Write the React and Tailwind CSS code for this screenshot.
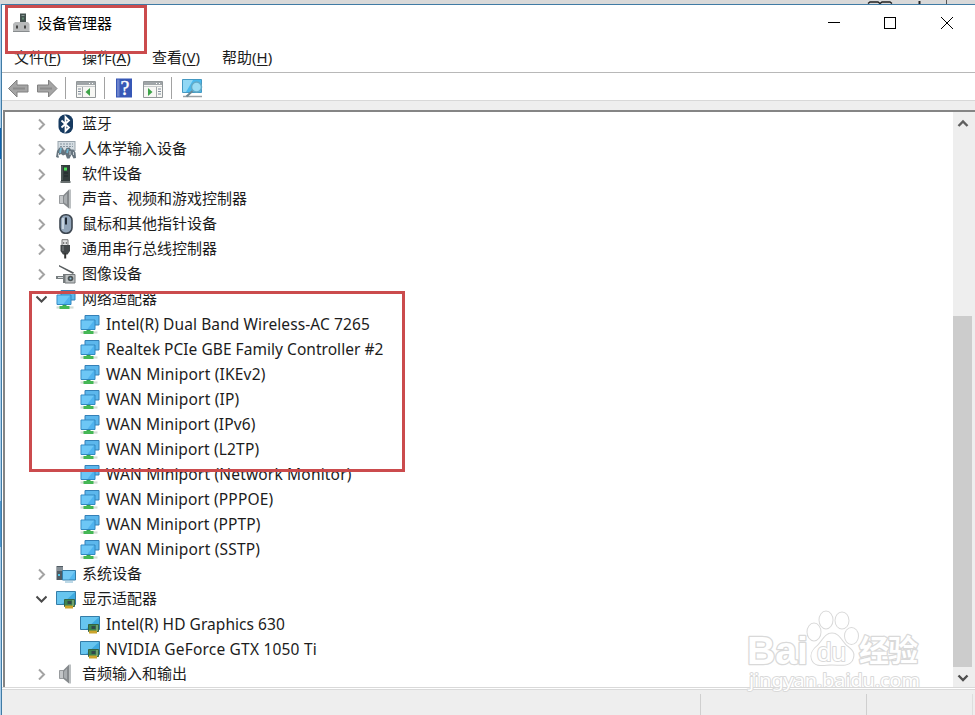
// Device manager window

const devices = [
  { icon: "bluetooth", text: "蓝牙" },
  { icon: "hid", text: "人体学输入设备" },
  { icon: "software", text: "软件设备" },
  { icon: "speaker", text: "声音、视频和游戏控制器" },
  { icon: "mouse", text: "鼠标和其他指针设备" },
  { icon: "usb", text: "通用串行总线控制器" },
  { icon: "imaging", text: "图像设备" },
  {
    icon: "network",
    text: "网络适配器",
    children: [
      { text: "Intel(R) Dual Band Wireless-AC 7265", tracking: "tracking-[0.1px]" },
      { text: "Realtek PCIe GBE Family Controller #2", tracking: "tracking-[0.04px]" },
      { text: "WAN Miniport (IKEv2)", tracking: "tracking-[0.2px]" },
      { text: "WAN Miniport (IP)", tracking: "tracking-[0.2px]" },
      { text: "WAN Miniport (IPv6)", tracking: "tracking-[0.15px]" },
      { text: "WAN Miniport (L2TP)", tracking: "tracking-[0.15px]" },
      { text: "WAN Miniport (Network Monitor)", tracking: "tracking-[0.18px]" },
      { text: "WAN Miniport (PPPOE)", tracking: "tracking-[0.15px]" },
      { text: "WAN Miniport (PPTP)", tracking: "tracking-[0.12px]" },
      { text: "WAN Miniport (SSTP)", tracking: "tracking-[0.2px]" },
    ],
  },
  { icon: "system", text: "系统设备" },
  {
    icon: "display",
    text: "显示适配器",
    children: [
      { text: "Intel(R) HD Graphics 630", tracking: "tracking-[0.05px]" },
      { text: "NVIDIA GeForce GTX 1050 Ti", tracking: "tracking-[0.2px]" },
    ],
  },
  { icon: "speaker", text: "音频输入和输出" },
];

const icons = {
  bluetooth: (
    <>
      <rect x="2.5" y="0.5" width="14.5" height="19" rx="6.5" fill="#163a60" />
      <path d="M5.5 6.5l7.5 7L9.5 17V3L13 6.5l-7.5 7" fill="none" stroke="#fff" strokeWidth="1.8" />
    </>
  ),
  hid: (
    <>
      <rect x="2" y="2.5" width="17" height="9" fill="#d5dde2" stroke="#9aa5ad" />
      <path d="M4 5h13M4 7.5h13" stroke="#8795a0" strokeWidth="1.2" strokeDasharray="2 1" />
      <path d="M0 18l1-6 2.5-3.5h3l2 4 2-3.5 3-.5 1.5 2h2.5l2 3 .5 5.5-2.5.5-2-4-2 4h-2.5l-1.5-4-2.5 1-2-1.5-2 1-.5 3z" fill="#66747e" />
      <path d="M5 9l-1 5M12 10l-1 4" stroke="#71b5cf" strokeWidth="1.8" />
      <path d="M2.5 17v-3M17.5 16v-3M14 12v4" stroke="#c6ced3" />
    </>
  ),
  software: (
    <>
      <path d="M5 1h9v16H5z" fill="#333c3c" />
      <path d="M4.5 17h10v2h-10z" fill="#697070" />
      <path d="M6 2v14" stroke="#6b7575" />
      <rect x="8" y="3.5" width="3" height="3" fill="#4de35b" />
      <path d="M8 9h4M8 12h4" stroke="#20292a" />
    </>
  ),
  speaker: (
    <>
      <path d="M3.5 6.5h4v8h-4z" fill="#c3c6c8" stroke="#85898c" strokeWidth=".8" />
      <path d="M7 6.5L13 .5v19l-6-5z" fill="#85898c" />
      <path d="M8 7.5l3-3v11l-3-2z" fill="#a9adb0" />
      <path d="M14 .5v19" stroke="#b4b8ba" strokeWidth="1.8" />
    </>
  ),
  mouse: (
    <>
      <rect x="4" y=".8" width="12" height="18.5" rx="5.5" fill="#91a4b8" stroke="#3d4650" strokeWidth="1.6" />
      <path d="M7 4v11" stroke="#c6d3df" strokeWidth="2" />
      <path d="M10 3.5v7" stroke="#202934" strokeWidth="2" />
    </>
  ),
  usb: (
    <>
      <path d="M6 .7h6v6H6z" fill="#e1e1e1" stroke="#777" />
      <path d="M7.7 3v2M10.3 3v2" stroke="#666" />
      <path d="M4.5 6h9.5v6l-2.5 3.5H7L4.5 12z" fill="#424648" />
      <path d="M7 7v5" stroke="#83888b" />
      <path d="M9.2 14v5.5" stroke="#333" strokeWidth="2" />
    </>
  ),
  imaging: (
    <>
      <path d="M3 1L18 8.5l-1 1.5L3 2.5z" fill="#575c5e" />
      <path d="M0 12h7v-2h3v9H7v-4H0z" fill="#777d7f" />
      <path d="M2 13.5h5" stroke="#dce0e1" />
      <path d="M9 10.5h10v8.5H9z" fill="#bcc0c1" stroke="#74797b" />
      <circle cx="14.5" cy="14.5" r="2.8" fill="#4d5355" />
      <circle cx="14.5" cy="14.5" r="1" fill="#91c4dd" />
    </>
  ),
  network: (
    <>
      <path d="M5 1.5h14v9.5H5z" fill="#5cb7ec" stroke="#3480b7" />
      <path d="M1 6h14v9.5H1z" fill="#4fb3ef" stroke="#3288c0" />
      <path d="M1.5 6.5h12.5L7.5 15h-6z" fill="#82d3fa" fillOpacity=".6" />
      <path d="M6.5 16h4v1.5h-4z" fill="#32ad49" />
      <path d="M.5 18.5h17" stroke="#d3ddd5" strokeWidth="2.2" />
      <path d="M3.5 18.5h10" stroke="#45b755" strokeWidth="3" />
    </>
  ),
  system: (
    <>
      <path d="M.5 2h6.5v14H.5z" fill="#505b63" />
      <path d="M1 4h6M1 6h6" stroke="#bac3c8" />
      <rect x="2" y="10" width="2" height="2" fill="#52c7e9" />
      <path d="M6.5 6.5h13v9.5h-13z" fill="#55b9f0" stroke="#347da8" />
      <path d="M7 7h12l-6 8.5H7z" fill="#91d9fa" fillOpacity=".5" />
      <path d="M9 18h8" stroke="#7ab2ce" />
    </>
  ),
  display: (
    <>
      <path d="M.5 2.5h19v13H.5z" fill="#3eaae0" stroke="#347da8" />
      <path d="M1 3h18L6 15H1z" fill="#84d7f8" fillOpacity=".6" />
      <path d="M8.5 10.5h10v7h-10z" fill="#3d8550" stroke="#356443" />
      <path d="M11.5 12h4v3h-4z" fill="#31494a" />
      <path d="M9 18h8" stroke="#cba42c" strokeWidth="3" />
      <path d="M17 11v6" stroke="#a0bd8e" />
    </>
  ),
};

function DeviceIcon({ name }) {
  return (
    <svg className="h-5 w-5 shrink-0" viewBox="0 0 20 20">
      {icons[name]}
    </svg>
  );
}

function Chevron({ open }) {
  return (
    <svg className="mr-[9px] h-3 w-3 shrink-0" viewBox="0 0 12 12" fill="none">
      {open ? (
        <path d="M1.5 3.5L6.5 8.5l5-5" stroke="#4a4a4a" strokeWidth="2" />
      ) : (
        <path d="M4 1.5L9 6.5 4 11.5" stroke="#a3a3a3" strokeWidth="2" />
      )}
    </svg>
  );
}

function DeviceGroup({ device }) {
  return (
    <li>
      <div className="flex h-[25px] items-center pl-[30px]">
        <Chevron open={!!device.children} />
        <DeviceIcon name={device.icon} />
        <span className="ml-1.5 pb-0.5 leading-none">{device.text}</span>
      </div>
      {device.children && (
        <ul>
          {device.children.map((child) => (
            <li key={child.text} className="flex h-[25px] items-center pl-[75px]">
              <DeviceIcon name={device.icon} />
              <span className={`ml-1.5 pt-0.5 font-['Noto_Sans',sans-serif] text-[15.5px] leading-none ${child.tracking}`}>
                {child.text}
              </span>
            </li>
          ))}
        </ul>
      )}
    </li>
  );
}

function TitleBar() {
  return (
    <header className="flex h-[37px] shrink-0 items-center pb-0.5">
      <svg className="ml-[10px] h-5 w-5" viewBox="0 0 20 20">
        <path d="M8 .5h6V11H8z" fill="#43514e" />
        <path d="M9.5 2.5h3" stroke="#8a9995" />
        <rect x="10" y="4.5" width="2" height="2" fill="#5f8a70" />
        <path d="M1 11l2-2h13l1.5 2v8H1z" fill="#b8babb" />
        <path d="M1 18.5h16.5" stroke="#888c8e" />
        <path d="M5 12.5v3M13 12.5v3" stroke="#444" strokeWidth="2" />
      </svg>
      <h1 className="ml-[5px] text-[15px] leading-none text-black">设备管理器</h1>
      <svg className="ml-auto mr-0.5 h-9 w-[150px] shrink-0" viewBox="0 0 150 36" fill="none" stroke="#000" shapeRendering="crispEdges">
        <path d="M5 17.5h12M61.5 12.5h11v11h-11z" />
        <path d="M118 12l12 12M130 12l-12 12" shapeRendering="auto" />
      </svg>
    </header>
  );
}

const menus = [
  { text: "文件", hotkey: "F", width: "w-[68px]" },
  { text: "操作", hotkey: "A", width: "w-[70px]" },
  { text: "查看", hotkey: "V", width: "w-[70px]" },
  { text: "帮助", hotkey: "H", width: "w-[70px]" },
];

function MenuBar() {
  return (
    <nav className="flex h-[31px] shrink-0 items-center border-b border-[#b8b8b8] pl-3">
      {menus.map((menu) => (
        <span key={menu.hotkey} className={`${menu.width} whitespace-nowrap text-[15px] leading-none`}>
          {menu.text}
          <span className="font-['Noto_Sans',sans-serif] text-[15px]">
            (<u className="underline-offset-2">{menu.hotkey}</u>)
          </span>
        </span>
      ))}
    </nav>
  );
}

function PaneIcon({ flip }) {
  return (
    <>
      <path d="M.5 .5h19v16H.5z" fill="#f7f7f4" stroke="#929799" />
      <path d="M1 1h18v3H1z" fill="#a0a5a8" />
      <path d="M13 2.5h1M16 2.5h1" stroke="#fff" />
      <path d="M1 5.5h18" stroke="#c7cacc" />
      {flip ? (
        <>
          <path d="M13.5 6v10" stroke="#a3a7aa" />
          <path d="M15 8h3M15 10.5h3M15 13h3" stroke="#7c8a9a" />
          <path d="M5 7l4.5 4L5 15z" fill="#3da348" />
        </>
      ) : (
        <>
          <path d="M6.5 6v10" stroke="#a3a7aa" />
          <path d="M2 8h3M2 10.5h3M2 13h3" stroke="#7c8a9a" />
          <path d="M14 7l-4.5 4 4.5 4z" fill="#3da348" />
        </>
      )}
    </>
  );
}

function Toolbar() {
  return (
    <div className="h-7 shrink-0 border-b border-[#d8d8d8]">
      <svg className="block h-7 w-[220px]" viewBox="2 73 220 28">
        <path d="M8.5 88.5l8.5-8.5v5h11v7H17v5z" fill="#a5a5a5" stroke="#808080" />
        <path d="M57 88.5L48.5 80v5h-11v7h11v5z" fill="#a5a5a5" stroke="#808080" />
        <path d="M13 88.5h12M40 88.5h12" stroke="#8c8c8c" strokeWidth="2" />
        <path d="M65.5 77v22M104.5 77v22M171.5 77v22" stroke="#a2a2a2" />
        <g transform="translate(76 81)"><PaneIcon /></g>
        <path d="M116 78.5h16v19h-16z" fill="#3657b6" />
        <path d="M117 79.5h2.5v17H117z" fill="#6c83cc" />
        <text x="125" y="94.5" textAnchor="middle" fill="#fff" fontFamily="Liberation Serif, serif" fontSize="20" stroke="#fff" strokeWidth=".4">?</text>
        <g transform="translate(143 81)"><PaneIcon flip /></g>
        <path d="M182.5 79.5h19v13h-19z" fill="#49b9ed" stroke="#4499c3" />
        <path d="M183 80h10l-7 12h-3z" fill="#91d8f5" />
        <path d="M183 96.5h19" stroke="#98a0a4" strokeWidth="1.5" />
        <circle cx="196.5" cy="87" r="5" fill="#9bdcf3" stroke="#63aac7" strokeWidth="1.5" />
        <path d="M192.5 91l-6 5.5" stroke="#6d8793" strokeWidth="2" />
      </svg>
    </div>
  );
}

function ScrollBar() {
  return (
    <div className="flex w-[22px] shrink-0 flex-col items-start bg-[#eeeeee]">
      <svg className="h-5 w-[19px]" viewBox="0 0 19 20" fill="none">
        <path d="M5.5 14L10 9.5l4.5 4.5" stroke="#5f5f5f" strokeWidth="2.4" />
      </svg>
      <div className="mt-[184px] h-[351px] w-[19px] bg-[#cccccc]" />
      <svg className="h-5 w-[19px]" viewBox="0 0 19 20" fill="none">
        <path d="M5.5 8.5l4.5 4.5 4.5-4.5" stroke="#4f4f4f" strokeWidth="2.4" />
      </svg>
    </div>
  );
}

function Watermark() {
  return (
    <svg
      className="absolute left-[740px] top-[605px] h-[95px] w-[190px]"
      viewBox="740 605 190 95"
      fill="#fff"
      stroke="#d9d9d9"
      strokeWidth="2.6"
      paintOrder="stroke"
      strokeLinejoin="round"
    >
      <text x="747" y="664" fontFamily="Liberation Sans, sans-serif" fontWeight="bold" fontSize="39" textLength="61" lengthAdjust="spacingAndGlyphs">Bai</text>
      <g strokeWidth="2">
        <ellipse cx="814" cy="632" rx="6.5" ry="8.5" />
        <ellipse cx="826" cy="620" rx="6.5" ry="8.5" />
        <ellipse cx="842" cy="620.5" rx="6.5" ry="8" />
        <ellipse cx="851.5" cy="636" rx="6.5" ry="8" />
        <path d="M832 633.5c-7 0-9 7-14 12-5 4-8 8-6 14 3 8 12 5 20 5s16 2 20-4c4-8-1-11-6-15-5-5-7-12-14-12z" />
      </g>
      <text x="817" y="661" fontFamily="Liberation Sans, sans-serif" fontSize="26" textLength="29" lengthAdjust="spacingAndGlyphs" strokeWidth="2">du</text>
      <text x="859" y="661" fontFamily="Noto Sans CJK SC, sans-serif" fontWeight="bold" fontSize="30" textLength="59">经验</text>
      <text x="749" y="687" fontFamily="Noto Sans, sans-serif" fontSize="18" textLength="171" lengthAdjust="spacingAndGlyphs" strokeWidth="1.8">jingyan.baidu.com</text>
    </svg>
  );
}

export default function App() {
  return (
    <div className="relative flex h-[715px] w-[975px] flex-col overflow-hidden bg-[#d9d9d9] font-['Noto_Sans_CJK_SC',sans-serif] text-[15px] text-[#1c1c1c]">
      {/* sliver of the desktop above the window */}
      <svg className="h-1 w-full shrink-0" viewBox="0 0 975 4" fill="none" stroke="#222">
        <path d="M868 3.5l2-1.5h8l2 1.5 2-1.5h8l2 1.5" strokeWidth="1.5" />
        <path d="M919.5 1v3" strokeWidth="2" />
        <path d="M946.5 0v4" stroke="#555" />
      </svg>
      <div className="flex min-h-0 flex-1">
        <div className="flex w-[1px] shrink-0 flex-col bg-[#a9cdea]">
          <div className="mt-[124px] h-[31px] bg-[#1262ad]" />
          <div className="mt-[342px] h-[46px] bg-[#4c94cc]" />
        </div>
        <div className="flex min-w-0 flex-1 flex-col border-l border-t border-[#407ba5] bg-white">
          <TitleBar />
          <MenuBar />
          <Toolbar />
          <div className="h-[9px] shrink-0 bg-[#eeeeee]" />
          <main className="ml-px flex h-[577px] shrink-0 border-l-2 border-t-2 border-[#858585] bg-white">
            <ul className="-mt-px min-w-0 flex-1">
              {devices.map((device) => (
                <DeviceGroup key={device.text} device={device} />
              ))}
            </ul>
            <ScrollBar />
          </main>
          <footer className="flex flex-1 flex-col bg-[#eeeeee]">
            <div className="h-[3px] border-y border-[#d9d9d9] bg-white" />
            <div className="flex flex-1 pt-1">
              <div className="w-[699px] border-r border-[#cfcfcf]" />
              <div className="w-[166px] border-r border-[#cfcfcf]" />
              <div className="w-[106px] border-r border-[#dddddd]" />
            </div>
          </footer>
        </div>
      </div>
      <Watermark />
      {/* highlight frames */}
      <div className="absolute left-[5px] top-[5px] h-[49px] w-[142px] border-3 border-[#cb4b4d]" />
      <div className="absolute left-[29px] top-[291px] h-[181px] w-[376px] border-3 border-[#cb4b4d]" />
    </div>
  );
}
